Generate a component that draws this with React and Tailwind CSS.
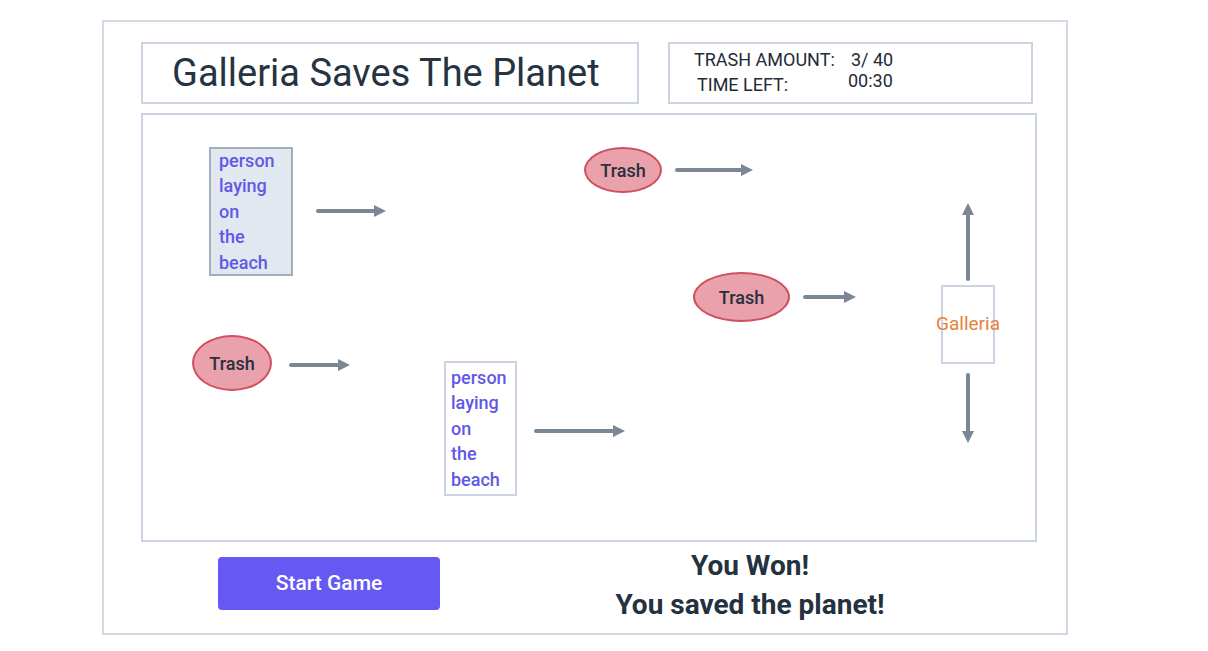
// App.jsx
// Wireframe of the "Galleria Saves The Planet" game screen

const font = { fontFamily: "Roboto, 'Noto Sans', sans-serif" }

// simple arrow drawn in svg, dir = right | up | down
function Arrow({ x, y, len, dir = "right" }) {
  const col = "#7b8794"
  if (dir === "right") {
    return (
      <svg className="absolute" style={{ left: x, top: y - 7 }} width={len} height="14" viewBox={`0 0 ${len} 14`}>
        <line x1="2" y1="7" x2={len - 10} y2="7" stroke={col} strokeWidth="4" strokeLinecap="round" />
        <polygon points={`${len - 12},1 ${len},7 ${len - 12},13`} fill={col} />
      </svg>
    )
  }
  const up = dir === "up"
  return (
    <svg className="absolute" style={{ left: x - 7, top: y }} width="14" height={len} viewBox={`0 0 14 ${len}`}>
      <line x1="7" y1={up ? 10 : 2} x2="7" y2={up ? len - 2 : len - 10} stroke={col} strokeWidth="4" strokeLinecap="round" />
      {up
        ? <polygon points={`1,12 7,0 13,12`} fill={col} />
        : <polygon points={`1,${len - 12} 7,${len} 13,${len - 12}`} fill={col} />}
    </svg>
  )
}

function Trash({ x, y, w, h }) {
  return (
    <div
      className="absolute flex items-center justify-center rounded-[50%] border-2 border-[#d0505f] bg-[#e9a1ab] text-[18px] font-medium text-[#27303d]"
      style={{ left: x, top: y, width: w, height: h }}
    >
      Trash
    </div>
  )
}

function Person({ x, y, w, h, filled, pad }) {
  return (
    <div
      className={
        "absolute flex flex-col justify-center text-[18px] font-medium leading-[25.6px] text-[#6158e6] border-2 " +
        (filled ? "bg-[#e2e8f0] border-[#a3aebc]" : "bg-white border-[#cbd5e1]")
      }
      style={{ left: x, top: y, width: w, height: h, paddingLeft: pad }}
    >
      <span>person</span>
      <span>laying</span>
      <span>on</span>
      <span>the</span>
      <span>beach</span>
    </div>
  )
}

export default function App() {
  return (
    <div className="w-[1208px] h-[651px] bg-white overflow-hidden" style={font}>
      <div className="ml-[102px] mt-[20px] w-[966px] h-[615px] border-2 border-[#d2dae4] pl-[37px] pt-[20px]">

        {/* header row */}
        <div className="flex gap-[29px]">
          <div className="w-[498px] h-[62px] border-2 border-[#cbd5e1] flex items-center pl-[29px] text-[38px] text-[#263340]">
            Galleria Saves The Planet
          </div>
          <div className="w-[365px] h-[62px] border-2 border-[#cbd5e1] text-[18px] text-[#1f2a37] leading-[22px] pt-[5px]">
            <div className="flex">
              <span className="ml-[24px] w-[157px]">TRASH AMOUNT:</span>
              <span>3/ 40</span>
            </div>
            <div className="flex -mt-[1px]">
              <span className="ml-[27px] w-[151px] mt-[4px]">TIME LEFT:</span>
              <span>00:30</span>
            </div>
          </div>
        </div>

        {/* game canvas */}
        <div className="relative mt-[9px] w-[896px] h-[429px] border-2 border-[#cbd5e1]">
          <Person x={66} y={32} w={84} h={129} pad={8} filled />
          <Arrow x={173} y={96} len={70} />

          <Trash x={441} y={32} w={78} h={46} />
          <Arrow x={532} y={55} len={78} />

          <Trash x={550} y={157} w={97} h={50} />
          <Arrow x={660} y={182} len={53} />

          <Arrow x={825} y={88} len={78} dir="up" />
          <div className="absolute left-[798px] top-[170px] w-[54px] h-[79px] border-2 border-[#cbd5e1] flex items-center justify-center">
            <span className="text-[19px] text-[#e5823a] whitespace-nowrap">Galleria</span>
          </div>
          <Arrow x={825} y={258} len={70} dir="down" />

          <Trash x={49} y={220} w={80} h={56} />
          <Arrow x={146} y={250} len={61} />

          <Person x={301} y={246} w={73} h={135} pad={5} />
          <Arrow x={391} y={316} len={91} />
        </div>

        {/* bottom row */}
        <div className="flex mt-[15px]">
          <button className="ml-[77px] w-[222px] h-[53px] rounded-[4px] bg-[#6659f3] text-white text-[21px] font-medium">
            Start Game
          </button>
          <div className="ml-[172px] w-[276px] text-center text-[28px] font-bold text-[#243140] leading-[39px] -mt-[11px]">
            <div>You Won!</div>
            <div className="whitespace-nowrap">You saved the planet!</div>
          </div>
        </div>
      </div>
    </div>
  )
}
